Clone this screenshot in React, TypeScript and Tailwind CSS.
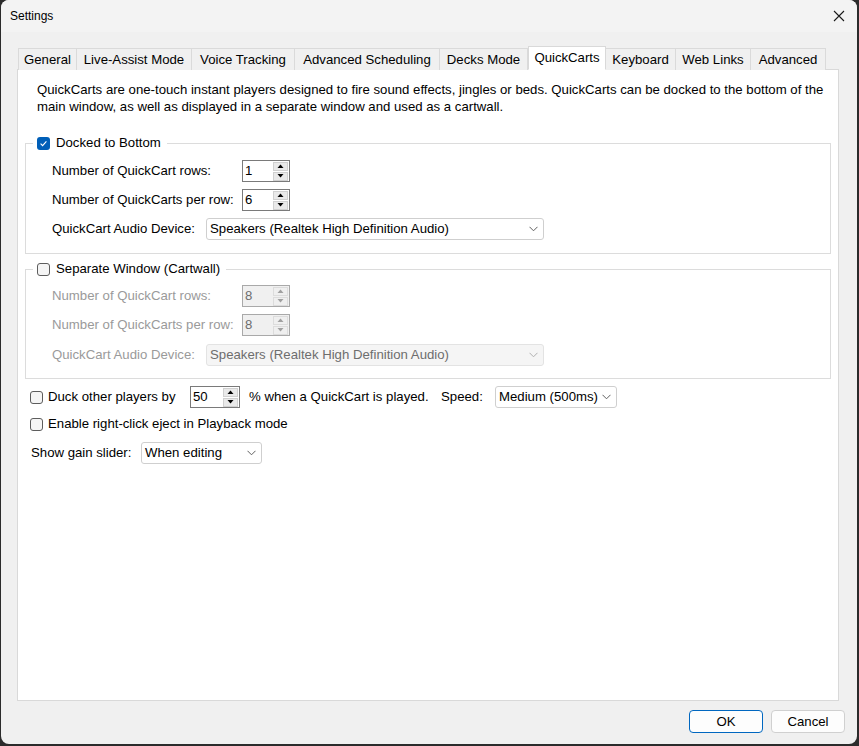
import React from "react";

function Check({ checked }: { checked?: boolean }) {
  return checked ? (
    <span className="w-[13px] h-[13px] rounded-[3px] bg-[#005fb8] flex items-center justify-center shrink-0">
      <svg width="9" height="9" viewBox="0 0 9 9">
        <path d="M1.6 4.7 L3.6 6.6 L7.4 2.4" stroke="white" strokeWidth="1.1" fill="none" />
      </svg>
    </span>
  ) : (
    <span className="w-[13px] h-[13px] rounded-[3px] border border-[#5d5d5d] bg-[#f5f5f5] shrink-0" />
  );
}

function Arrow({ up, disabled }: { up?: boolean; disabled?: boolean }) {
  return (
    <div
      className={
        disabled
          ? "w-[15px] h-[9px] bg-[#efefef] border border-[#dcdcdc] flex items-center justify-center"
          : "w-[15px] h-[9px] bg-[#e9e9e9] border border-[#d0d0d0] flex items-center justify-center"
      }
    >
      <svg width="7" height="4" viewBox="0 0 7 4">
        <path d={up ? "M0.5 4 L3.5 0.5 L6.5 4 Z" : "M0.5 0 L3.5 3.5 L6.5 0 Z"} fill={disabled ? "#a0a0a0" : "#000"} />
      </svg>
    </div>
  );
}

function Spin({ value, disabled, w = "w-[48px]" }: { value: string; disabled?: boolean; w?: string }) {
  return (
    <div
      className={
        (disabled
          ? "border-[#a9a9a9] bg-[#f0f0f0] text-[#6d6d6d] "
          : "border-[#7a7a7a] bg-white text-black ") +
        "h-[22px] border flex items-center shrink-0 " +
        w
      }
    >
      <span className="flex-1 pl-[2px] leading-none">{value}</span>
      <div className="flex flex-col gap-[1px] mr-[1px]">
        <Arrow up disabled={disabled} />
        <Arrow disabled={disabled} />
      </div>
    </div>
  );
}

function Combo({ text, disabled, w }: { text: string; disabled?: boolean; w: string }) {
  return (
    <div
      className={
        (disabled
          ? "border-[#e3e3e3] bg-[#f5f5f5] text-[#6d6d6d] "
          : "border-[#cfcfcf] bg-white text-black ") +
        "h-[22px] border rounded-[3px] flex items-center pl-[3px] pr-[5px] shrink-0 " +
        w
      }
    >
      <span className="flex-1 whitespace-nowrap">{text}</span>
      <svg width="9" height="6" viewBox="0 0 9 6" className="ml-[4px] shrink-0">
        <path d="M0.5 0.8 L4.5 4.8 L8.5 0.8" stroke={disabled ? "#b0b0b0" : "#606060"} strokeWidth="1" fill="none" />
      </svg>
    </div>
  );
}

function Group({
  title,
  checked,
  disabled,
  rowsValue,
  perRowValue,
  first,
}: {
  title: string;
  checked?: boolean;
  disabled?: boolean;
  rowsValue: string;
  perRowValue: string;
  first?: boolean;
}) {
  const lab = disabled ? "text-[#9a9a9a]" : "text-black";
  return (
    <fieldset className={(first ? "mt-[18px] pb-[13px] " : "mt-[5px] pb-[12px] ") + "border border-[#dcdcdc]"}>
      <legend className="ml-[7px] px-[4px] h-[20px] flex items-center gap-[6px]">
        <Check checked={checked} />
        <span className="mr-[2px]">{title}</span>
      </legend>
      <div className="pl-[26px]">
        <div className={(first ? "mt-[7px] " : "mt-[6px] ") + "flex items-center"}>
          <span className={"w-[190px] " + lab}>Number of QuickCart rows:</span>
          <Spin value={rowsValue} disabled={disabled} />
        </div>
        <div className="mt-[7px] flex items-center">
          <span className={"w-[190px] " + lab}>Number of QuickCarts per row:</span>
          <Spin value={perRowValue} disabled={disabled} />
        </div>
        <div className={(first ? "mt-[7px] " : "mt-[8px] ") + "flex items-center"}>
          <span className={"w-[154px] " + lab}>QuickCart Audio Device:</span>
          <Combo text="Speakers (Realtek High Definition Audio)" disabled={disabled} w="w-[338px]" />
        </div>
      </div>
    </fieldset>
  );
}

const tabs: { name: string; w: string; sel?: boolean }[] = [
  { name: "General", w: "w-[59px]" },
  { name: "Live-Assist Mode", w: "w-[115px]" },
  { name: "Voice Tracking", w: "w-[103px]" },
  { name: "Advanced Scheduling", w: "w-[145px]" },
  { name: "Decks Mode", w: "w-[88px]" },
  { name: "QuickCarts", w: "w-[78px]", sel: true },
  { name: "Keyboard", w: "w-[70px]" },
  { name: "Web Links", w: "w-[75px]" },
  { name: "Advanced", w: "w-[75px]" },
];

export default function App() {
  return (
    <div className="w-[859px] h-[746px] bg-[#2b2b2b] pl-[1px] pr-[2px] pb-[2px] font-['Liberation_Sans',Arial,sans-serif] text-[13.2px] text-black">
      <div className="h-full bg-[#f0f0f0] rounded-[8px] flex flex-col overflow-hidden">
        {/* title bar */}
        <div className="h-[32px] bg-[#f3f3f3] flex items-center pl-[9px] pr-[10px] shrink-0">
          <span className="flex-1 text-[12px]">Settings</span>
          <svg width="12" height="12" viewBox="0 0 12 12" className="mr-[2px]">
            <path d="M1 1 L11 11 M11 1 L1 11" stroke="#1a1a1a" strokeWidth="1.1" />
          </svg>
        </div>

        <div className="flex-1 flex flex-col pl-[16px] pr-[18px] pt-[14px]">
          {/* tabs */}
          <div className="h-[24px] flex items-end pl-[1px] relative z-10 -mb-px">
            {tabs.map((t) =>
              t.sel ? (
                <div
                  key={t.name}
                  className={"h-[24px] bg-white border border-[#d9d9d9] border-b-white flex items-center justify-center whitespace-nowrap " + t.w}
                >
                  {t.name}
                </div>
              ) : (
                <div
                  key={t.name}
                  className={"h-[22px] bg-[#f0f0f0] border-t border-r border-[#dadada] first:border-l flex items-center justify-center whitespace-nowrap " + t.w}
                >
                  {t.name}
                </div>
              )
            )}
          </div>

          {/* panel */}
          <div className="flex-1 bg-white border border-[#d9d9d9] pl-[7px] pr-[7px] pt-[11px]">
            <p className="ml-[12px] leading-[17px]">
              QuickCarts are one-touch instant players designed to fire sound effects, jingles or beds. QuickCarts can be docked to the bottom of the main window, as well as displayed in a separate window and used as a cartwall.
            </p>

            <Group title="Docked to Bottom" checked rowsValue="1" perRowValue="6" first />
            <Group title="Separate Window (Cartwall)" disabled rowsValue="8" perRowValue="8" />

            <div className="mt-[7px] h-[22px] flex items-center pl-[5px]">
              <Check />
              <span className="ml-[5px] w-[142px]">Duck other players by</span>
              <Spin value="50" w="w-[50px]" />
              <span className="ml-[9px] w-[192px]">% when a QuickCart is played.</span>
              <span className="w-[54px]">Speed:</span>
              <Combo text="Medium (500ms)" w="w-[122px]" />
            </div>

            <div className="mt-[5px] h-[22px] flex items-center pl-[5px]">
              <Check />
              <span className="ml-[5px]">Enable right-click eject in Playback mode</span>
            </div>

            <div className="mt-[7px] h-[22px] flex items-center pl-[6px]">
              <span className="w-[110px]">Show gain slider:</span>
              <Combo text="When editing" w="w-[121px]" />
            </div>
          </div>

          {/* footer */}
          <div className="h-[43px] flex items-start justify-end pt-[9px] gap-[8px] -mr-[6px] shrink-0">
            <button className="w-[74px] h-[23px] bg-[#fdfdfd] border border-[#0067c0] rounded-[4px]">OK</button>
            <button className="w-[74px] h-[23px] bg-[#fdfdfd] border border-[#d0d0d0] rounded-[4px]">Cancel</button>
          </div>
        </div>
      </div>
    </div>
  );
}
